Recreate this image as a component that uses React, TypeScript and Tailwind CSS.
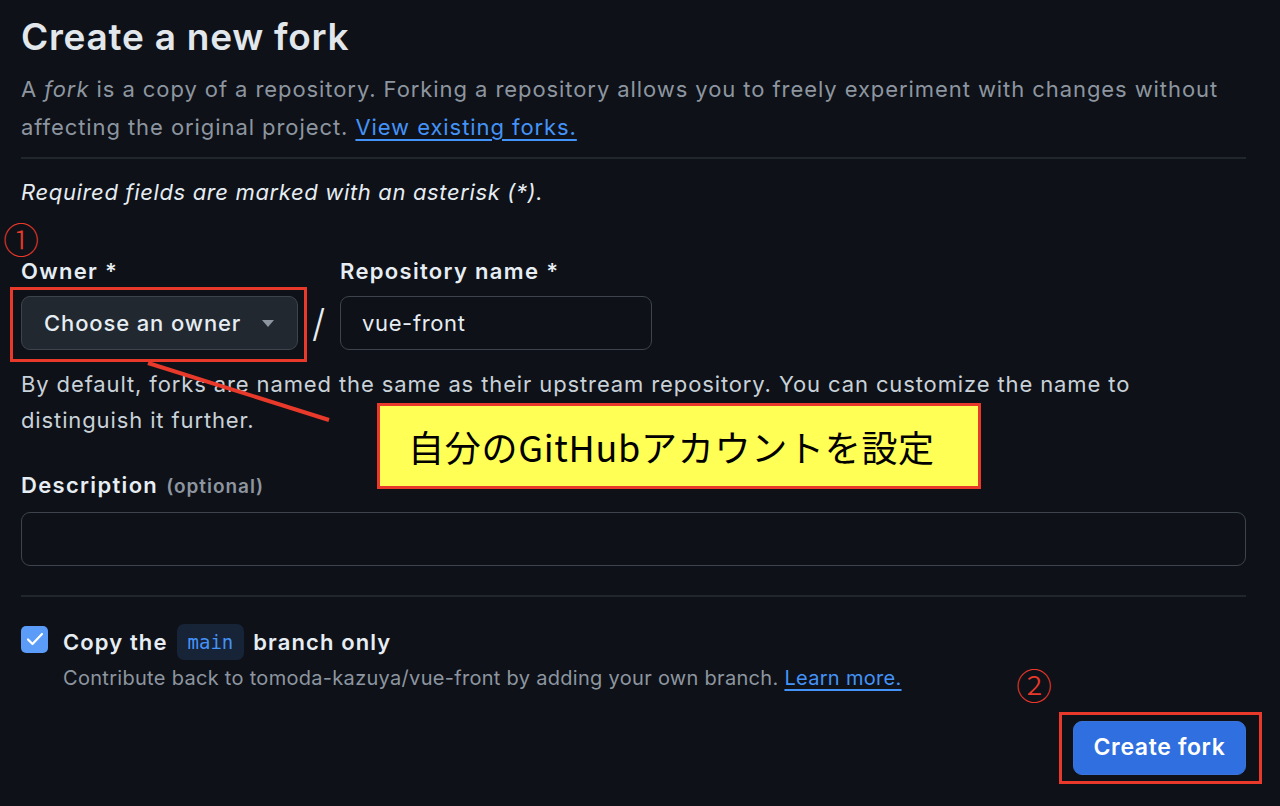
const RED = "border-[#e8392a]";

export default function App() {
  return (
    <div className="relative w-[1280px] h-[806px] overflow-hidden bg-[#0e1117] font-['Inter','Liberation_Sans',sans-serif] text-[#e6edf3] tracking-[0.04em]">
      <div className="ml-[21px] w-[1225px] pt-[14px]">
        <h1 className="text-[37px] leading-[46px] font-semibold tracking-[0.02em] text-[#e2e7ec]">Create a new fork</h1>
        <p className="mt-[10px] text-[22px] leading-[38px] tracking-[0.042em] text-[#8d96a0]">
          A <em>fork</em> is a copy of a repository. Forking a repository allows you to freely experiment with changes without affecting the original project.{" "}
          <a href="#" className="text-[#4493f8] underline underline-offset-4">View existing forks.</a>
        </p>
        <div className="mt-[11px] border-t-2 border-[#21262d]" />

        <p className="mt-[18px] text-[22px] leading-[30px] italic text-[#e6edf3]">Required fields are marked with an asterisk (*).</p>

        <div className="mt-[49px] flex items-end gap-[10px]">
          <div className="flex flex-col">
            <label className="text-[22px] leading-[30px] tracking-[0.06em] font-semibold">Owner *</label>
            <button className="mt-[10px] flex h-[54px] w-[277px] items-center justify-between rounded-[9px] border border-[#3d444d] bg-[#212830] pl-[22px] pr-[23px] text-[22px] tracking-[0.04em] font-medium text-[#e6edf3]">
              <span>Choose an owner</span>
              <svg width="12" height="7" viewBox="0 0 12 7"><path d="M0 0h12L6 7z" fill="#8d96a0" /></svg>
            </button>
          </div>
          <div className="flex h-[54px] w-[22px] items-center justify-center text-[38px] font-light text-[#e6edf3]">/</div>
          <div className="flex flex-col">
            <label className="text-[22px] leading-[30px] tracking-[0.06em] font-semibold">Repository name *</label>
            <div className="mt-[10px] flex h-[54px] w-[312px] items-center rounded-[9px] border border-[#3d444d] bg-[#0e1117] px-[21px] text-[22px]">vue-front</div>
          </div>
        </div>

        <p className="mt-[16px] w-[1150px] text-[22px] leading-[36px] tracking-[0.04em] text-[#c9d1d9]">
          By default, forks are named the same as their upstream repository. You can customize the name to distinguish it further.
        </p>

        <div className="mt-[32px] flex items-baseline gap-[8px]">
          <span className="text-[22px] leading-[30px] tracking-[0.06em] font-semibold">Description</span>
          <span className="text-[19px] font-semibold tracking-[0.05em] text-[#8d96a0]">(optional)</span>
        </div>
        <div className="mt-[10px] h-[54px] w-full rounded-[9px] border border-[#3d444d]" />

        <div className="mt-[29px] border-t-2 border-[#21262d]" />

        <div className="mt-[27px] flex gap-[15px]">
          <div className="mt-[2px] flex h-[27px] w-[27px] items-center justify-center rounded-[5px] bg-[#5a9cf8]">
            <svg width="18" height="14" viewBox="0 0 18 14"><path d="M2 7.5l4.5 4.5L16 2" stroke="#fff" strokeWidth="2.2" fill="none" strokeLinecap="round" strokeLinejoin="round" /></svg>
          </div>
          <div className="flex flex-col">
            <div className="flex items-center text-[22px] leading-[32px] tracking-[0.05em] font-semibold">
              <span>Copy the</span>
              <code className="mx-[9px] rounded-[7px] bg-[#172336] px-[11px] py-[2px] font-['DejaVu_Sans_Mono',monospace] text-[19px] tracking-normal font-normal text-[#4493f8]">main</code>
              <span>branch only</span>
            </div>
            <p className="mt-[3px] text-[20px] leading-[30px] tracking-[0.015em] text-[#8d96a0]">
              Contribute back to tomoda-kazuya/vue-front by adding your own branch.{" "}
              <a href="#" className="text-[#4493f8] underline underline-offset-4">Learn more.</a>
            </p>
          </div>
        </div>

        <div className="mt-[28px] flex justify-end">
          <button className="h-[54px] w-[173px] rounded-[9px] border border-[#3b74d9] bg-[#2f6fe0] text-[23px] font-semibold text-white">Create fork</button>
        </div>
      </div>

      {/* annotations */}
      <span className="absolute left-[3px] top-[216px] text-[36px] leading-[44px] tracking-normal text-[#e8392a] font-['Noto_Sans_CJK_JP',sans-serif] font-light">①</span>
      <div className={`absolute left-[10px] top-[287px] h-[75px] w-[297px] border-[3px] ${RED}`} />
      <svg className="absolute left-0 top-0" width="1280" height="806" style={{ pointerEvents: "none" }}>
        <line x1="148" y1="363" x2="329" y2="420" stroke="#e8392a" strokeWidth="4" />
      </svg>
      <div className={`absolute left-[377px] top-[403px] flex h-[86px] w-[604px] items-center border-[3px] ${RED} bg-[#ffff55] pl-[28px]`}>
        <span className="text-[36px] tracking-[0.02em] text-black font-['Noto_Sans_CJK_JP',sans-serif]">自分のGitHubアカウントを設定</span>
      </div>
      <span className="absolute left-[1016px] top-[662px] text-[36px] leading-[44px] tracking-normal text-[#e8392a] font-['Noto_Sans_CJK_JP',sans-serif] font-light">②</span>
      <div className={`absolute left-[1059px] top-[712px] h-[72px] w-[203px] border-[3px] ${RED}`} />
    </div>
  );
}
